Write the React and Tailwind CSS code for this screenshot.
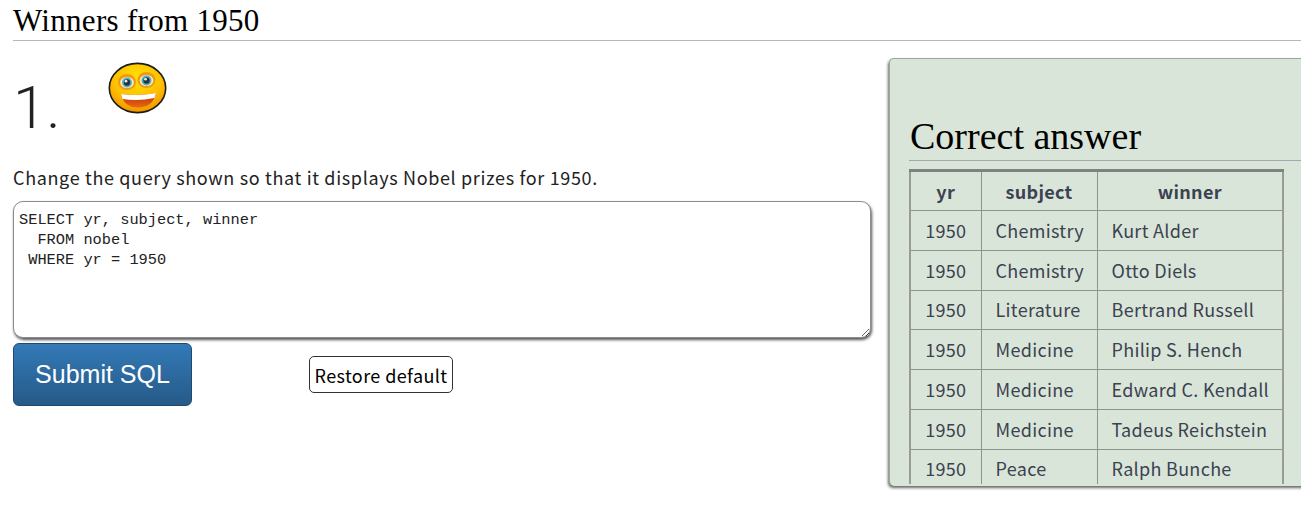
const rows = [
  ["Chemistry", "Kurt Alder"],
  ["Chemistry", "Otto Diels"],
  ["Literature", "Bertrand Russell"],
  ["Medicine", "Philip S. Hench"],
  ["Medicine", "Edward C. Kendall"],
  ["Medicine", "Tadeus Reichstein"],
  ["Peace", "Ralph Bunche"],
];

const bodyFont = "font-['Noto_Sans_CJK_KR','Noto_Sans',sans-serif]";

function Smiley() {
  return (
    <svg width="60" height="52" viewBox="0 0 60 52" className="block">
      <defs>
        <radialGradient id="face" cx="50%" cy="30%" r="72%">
          <stop offset="0%" stopColor="#ffe000" />
          <stop offset="60%" stopColor="#ffc000" />
          <stop offset="100%" stopColor="#f09000" />
        </radialGradient>
        <linearGradient id="mouth" x1="0" y1="0" x2="0" y2="1">
          <stop offset="0%" stopColor="#b82a08" />
          <stop offset="100%" stopColor="#ea6a10" />
        </linearGradient>
      </defs>
      <ellipse cx="29.5" cy="26" rx="28.2" ry="24.6" fill="url(#face)" stroke="#1c1c1c" strokeWidth="1.6" />
      <ellipse cx="19" cy="20" rx="9" ry="8" fill="#ee9a18" />
      <ellipse cx="38.5" cy="18" rx="9" ry="8" fill="#ee9a18" />
      <ellipse cx="19" cy="20.5" rx="6.8" ry="5.6" fill="#f8eec0" />
      <ellipse cx="38.5" cy="18.5" rx="6.8" ry="5.6" fill="#f8eec0" />
      <circle cx="19" cy="20.5" r="5" fill="#4fb0c8" />
      <circle cx="38.5" cy="18.5" r="5" fill="#4fb0c8" />
      <circle cx="19" cy="20.5" r="3.2" fill="#25343a" />
      <circle cx="38.5" cy="18.5" r="3.2" fill="#25343a" />
      <circle cx="18" cy="19.2" r="1.4" fill="#e4ecee" />
      <circle cx="37.5" cy="17.2" r="1.4" fill="#e4ecee" />
      <path d="M13 32 Q30 34.5 48 31 Q45 45.5 30 45.5 Q16 45.5 13 32 Z" fill="url(#mouth)" />
      <path d="M13 32 Q30 34.5 48 31 L46.5 36 Q30 39.5 14.5 37 Z" fill="#fff" />
    </svg>
  );
}

export default function App() {
  return (
    <div className="w-[1301px] h-[521px] overflow-hidden bg-white pl-[13px] text-[#222]">
      <h2 className="h-[41px] border-b border-[#b4b7bc] font-['Liberation_Serif',serif] text-[31px] leading-[41px] tracking-[0.3px] text-black">
        Winners from 1950
      </h2>

      <div className="flex pt-[17px]">
        <div className="w-[858px] shrink-0">
          <div className="flex h-[85px]">
            <div className="mt-[15px] w-[95px] font-['Roboto',sans-serif] font-light text-[60px] leading-[70px] text-[#222]">
              1.
            </div>
            <div className="pt-[4px]">
              <Smiley />
            </div>
          </div>

          <p className={`mt-[21px] h-[30px] ${bodyFont} text-[18px] leading-[26px] tracking-[0.65px] text-[#222]`}>
            Change the query shown so that it displays Nobel prizes for 1950.
          </p>

          <textarea
            readOnly
            spellCheck={false}
            defaultValue={"SELECT yr, subject, winner\n  FROM nobel\n WHERE yr = 1950"}
            className="mt-[7px] block h-[137px] w-[858px] rounded-[10px] border border-[#8a8d91] bg-white px-[5px] pt-[8px] font-['Liberation_Mono',monospace] text-[15.33px] leading-[20px] text-[#222] shadow-[1px_2px_3px_#555] outline-none"
          />

          <div className="mt-[5px] flex items-center">
            <button className="h-[63px] w-[179px] rounded-[6px] border border-[#1f4a70] bg-gradient-to-b from-[#337ab7] to-[#265a88] font-['Liberation_Sans',sans-serif] text-[25px] text-white">
              Submit SQL
            </button>
            <button className={`ml-[117px] h-[37px] w-[144px] rounded-[5px] border border-[#333] bg-white pt-[2px] ${bodyFont} text-[18px] leading-[33px] tracking-[0.4px] text-black`}>
              Restore default
            </button>
          </div>
        </div>

        <div className="ml-[18px] h-[428px] w-[430px] shrink-0 overflow-hidden rounded-[5px] border-t border-l border-[#a0a5a0] bg-[#dae5d9] shadow-[-1px_2px_3px_#666]">
          <div className="overflow-hidden h-[425px] pl-[19px] pt-[55px]">
            <h2 className="h-[47px] border-b border-[#a3a8b0] pl-px font-['Liberation_Serif',serif] text-[38px] leading-[44px] text-black">
              Correct answer
            </h2>
            <table className={`mt-[8px] w-[375px] table-fixed border-collapse border-2 border-[#999b96] ${bodyFont} text-[18px] tracking-[0.3px] text-[#3b4250]`}>
              <thead>
                <tr className="h-[40px]">
                  <th className="w-[71px] border border-[#8f938c] border-t-[3px] border-t-[#808280] font-bold">yr</th>
                  <th className="w-[116px] border border-[#8f938c] border-t-[3px] border-t-[#808280] font-bold">subject</th>
                  <th className="border border-[#8f938c] border-t-[3px] border-t-[#808280] font-bold">winner</th>
                </tr>
              </thead>
              <tbody>
                {rows.map(([subject, winner], i) => (
                  <tr key={i} className="h-[39.8px]">
                    <td className="border border-[#8f938c] text-center">1950</td>
                    <td className="border border-[#8f938c] pl-[14px]">{subject}</td>
                    <td className="border border-[#8f938c] pl-[14px] whitespace-nowrap">{winner}</td>
                  </tr>
                ))}
              </tbody>
            </table>
          </div>
        </div>
      </div>
    </div>
  );
}
